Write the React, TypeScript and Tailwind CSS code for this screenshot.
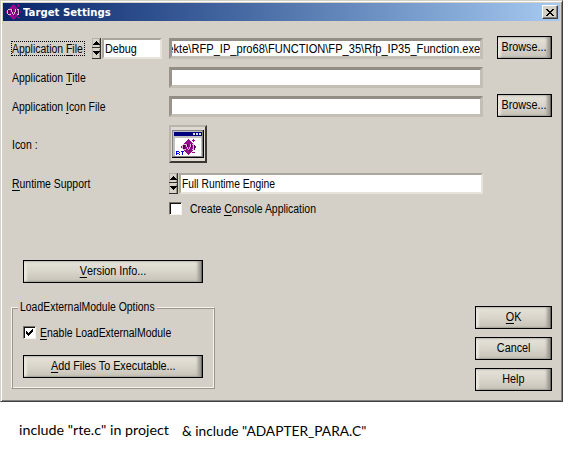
import type { ReactNode } from "react";

function Label({ children, scale = "scale-x-[0.87]", origin = "origin-left" }: { children: ReactNode; scale?: string; origin?: string }) {
  return <span className={`inline-block whitespace-pre ${origin} ${scale}`}>{children}</span>;
}

function Key({ children }: { children: ReactNode }) {
  return <span className="inline-block h-[13px] border-b border-black leading-[13px]">{children}</span>;
}

function Button({ children, className }: { children: ReactNode; className: string }) {
  return (
    <button
      className={`flex h-[23px] shrink-0 items-center justify-center border border-black bg-linear-to-b from-[#e6e3da] via-[#d9d5cb] to-[#c6c2b8] shadow-[inset_-1px_0_1px_#66645d,inset_-4px_0_3px_#a09d94,inset_3px_0_2px_#e9e6dc,inset_0_-1px_1px_#aaa69c] ${className}`}
    >
      <Label origin="origin-center" scale="scale-x-[0.9]">{children}</Label>
    </button>
  );
}

function Field({ children }: { children?: ReactNode }) {
  return (
    <div className="mt-[2px] flex h-[21px] w-[314px] shrink-0 items-center overflow-hidden border-[3px] border-t-[#928e85] border-r-[#c3bfb5] border-b-[#c3bfb5] border-l-[#98948b] bg-white">
      {children}
    </div>
  );
}

function Ring({ children, className }: { children: ReactNode; className: string }) {
  return (
    <div className="flex shrink-0 items-start">
      <svg className="mt-[2px] h-[21px] w-[9px]" viewBox="0 0 9 21" shapeRendering="crispEdges">
        <path d="M0 0h9v21H0z" fill="#d8d4ca" />
        <path d="M0 0h9v1H1v19H0z" fill="#b5b1a7" />
        <path d="M8 0h1v21H0v-1h8zM0 9h9v1H0z" fill="#33312d" />
        <path d="M7 1h1v8H7zM7 11h1v9H7z" fill="#9c988e" />
        <path d="M4 3h1v1h1v1h1v1h1v1H1V6h1V5h1V4h1zM1 13h7v1H7v1H6v1H5v1H4v-1H3v-1H2v-1H1z" fill="#000" />
      </svg>
      <div className={`mt-[2px] ml-px flex h-[21px] items-center border-[2px] border-t-[#aaa69c] border-r-[#e7e3d9] border-b-[#e7e3d9] border-l-[#aaa69c] bg-white pt-px pl-px ${className}`}>
        {children}
      </div>
    </div>
  );
}

function Check({ checked = false }: { checked?: boolean }) {
  return (
    <span className="block h-[13px] w-[13px] shrink-0 border border-t-[#77736b] border-r-[#f4f1ea] border-b-[#f4f1ea] border-l-[#77736b] bg-white shadow-[inset_1px_1px_0_#111]">
      {checked && (
        <svg className="h-[11px] w-[11px]" viewBox="0 0 11 11" shapeRendering="crispEdges">
          <path d="M2 4h1v1h1v1h1V5h1V4h1V3h1V2h1v3H8v1H7v1H6v1H5v1H4V8H3V7H2z" fill="#000" />
        </svg>
      )}
    </span>
  );
}

function CviMark() {
  return (
    <g>
      <path d="M8 0l8 8-8 8-8-8z" fill="#96088f" />
      <path d="M3 6h2v4H3zM7 5h1v3H7zM9 11h1v1H9zM11 5h1v4h-1zM14 6h1v5h-1z" fill="#4a0447" />
      <path d="M3 5h3v1H3zM2 6h1v4H2zM3 10h3v1H3zM6 5h1v3H6zM7 8h1v2H7zM8 10h1v1H8zM9 8h1v2H9zM10 5h1v3h-1zM12 5h2v1h-2zM13 6h1v4h-1zM12 10h2v1h-2z" fill="#dcb8d6" />
      <path d="M12 1h3v1h-3zM13 0h1v3h-1zM12 13h3v1h-3z" fill="#96088f" />
    </g>
  );
}

function TargetIcon() {
  return (
    <div className="mt-[2px] h-[38px] w-[38px] border-2 border-t-[#b9b5ab] border-r-[#3c3934] border-b-[#3c3934] border-l-[#b9b5ab] bg-[#dedad0] p-px">
      <svg className="h-[32px] w-[32px]" viewBox="0 0 32 32" shapeRendering="crispEdges">
        <path d="M0 2h32v28H0z" fill="#000" />
        <path d="M0 2h31v27H0z" fill="#808080" />
        <path d="M1 3h29v25H1z" fill="#c0c0c0" />
        <path d="M2 4h28v4H2z" fill="#000080" />
        <path d="M21 5h2v2h-2zM24 5h2v2h-2zM27 5h2v2h-2z" fill="#e0e0e0" />
        <path d="M3 10h26v18H3z" fill="#fff" />
        <g transform="translate(8 11)"><CviMark /></g>
        <path d="M4 23h3v1H5v3H4zM7 24h1v1H7zM5 25h2v1H5zM7 26h1v1H7zM9 23h3v1h-1v3h-1v-3H9z" fill="#0000ee" />
      </svg>
    </div>
  );
}

function Row({ label, height, children }: { label: ReactNode; height: string; children: ReactNode }) {
  return (
    <div className={`flex items-start ${height}`}>
      <div className="w-[157px] shrink-0">{label}</div>
      {children}
    </div>
  );
}

export default function App() {
  return (
    <main className="h-[458px] w-[570px] overflow-hidden bg-white font-['Liberation_Sans',Arial,sans-serif] text-[12px] leading-[15px] text-black">
      <section className="h-[402px] w-[563px] border border-t-[#d4d0c8] border-r-[#404040] border-b-[#404040] border-l-[#d4d0c8] bg-[#d4d0c8] shadow-[inset_1px_1px_0_#fff,inset_-1px_-1px_0_#808080]">
        <header className="mx-[2px] mt-[2px] flex h-[18px] items-center bg-linear-to-r from-[#0a246a] to-[#a6caf0] px-[2px]">
          <svg className="h-[16px] w-[16px]" viewBox="0 0 16 16" shapeRendering="crispEdges"><CviMark /></svg>
          <h1 className="ml-[2px] font-['DejaVu_Sans',Verdana,sans-serif] text-[11px] font-bold text-white">
            <Label scale="scale-x-[0.92]">Target Settings</Label>
          </h1>
          <button className="ml-auto flex h-[14px] w-[16px] items-center justify-center border border-t-white border-r-[#404040] border-b-[#404040] border-l-white bg-[#d4d0c8] shadow-[inset_-1px_-1px_0_#808080]">
            <svg className="h-[7px] w-[8px]" viewBox="0 0 8 7" shapeRendering="crispEdges">
              <path d="M0 0h2v1h1v1h2V1h1V0h2v1H7v1H6v1H5v1h1v1h1v1h1v1H6V6H5V5H3v1H2v1H0V6h1V5h1V4h1V3H2V2H1V1H0z" fill="#000" />
            </svg>
          </button>
        </header>

        <div className="pt-[15px] pl-[11px]">
          <Row
            height="h-[29px]"
            label={
              <div className="flex items-start">
                <div className="mt-[5px] mr-[7px] -ml-px flex h-[15px] w-[74px] items-center border border-dotted border-black pt-[2px]">
                  <Label>Application <Key>F</Key>ile</Label>
                </div>
                <Ring className="w-[60px]"><Label scale="scale-x-[0.9]">Debug</Label></Ring>
              </div>
            }
          >
            <Field>
              <div className="flex w-full justify-end pt-px">
                <Label origin="origin-right" scale="scale-x-[0.925]">ekte\RFP_IP_pro68\FUNCTION\FP_35\Rfp_IP35_Function.exe</Label>
              </div>
            </Field>
            <Button className="ml-[14px] w-[55px]">Browse...</Button>
          </Row>
          <Row height="h-[29px]" label={<div className="pt-[6px]"><Label>Application <Key>T</Key>itle</Label></div>}>
            <Field />
          </Row>
          <Row height="h-[29px]" label={<div className="pt-[6px]"><Label>Application <Key>I</Key>con File</Label></div>}>
            <Field />
            <Button className="ml-[14px] w-[55px]">Browse...</Button>
          </Row>
          <Row height="h-[48px]" label={<div className="pt-[15px]"><Label>Icon :</Label></div>}>
            <TargetIcon />
          </Row>
          <Row height="h-[31px]" label={<div className="pt-[6px]"><Label><Key>R</Key>untime Support</Label></div>}>
            <Ring className="w-[304px]"><Label scale="scale-x-[0.86]">Full Runtime Engine</Label></Ring>
          </Row>
          <Row height="h-[58px]" label={null}>
            <Check />
            <div className="ml-[8px]"><Label>Create <Key>C</Key>onsole Application</Label></div>
          </Row>
        </div>

        <div className="flex items-start">
          <div className="w-[226px] shrink-0 pl-[10px]">
            <Button className="ml-[12px] w-[180px]"><Key>V</Key>ersion Info...</Button>
            <fieldset className="mt-[17px] h-[89px] w-[204px] border border-t-[#f5f3ee] border-r-[#9a9588] border-b-[#9a9588] border-l-[#f5f3ee] px-[11px] shadow-[inset_1px_1px_0_#9a9588,inset_-1px_-1px_0_#f5f3ee]">
              <legend className="-ml-[5px] w-[139px] bg-[#d4d0c8] px-[2px]"><Label>LoadExternalModule Options</Label></legend>
              <div className="mt-[11px] flex h-[18px]">
                <Check checked />
                <div className="ml-[4px]"><Label><Key>E</Key>nable LoadExternalModule</Label></div>
              </div>
              <Button className="mt-[11px] w-[180px]"><Key>A</Key>dd Files To Executable...</Button>
            </fieldset>
          </div>
          <div className="mt-[46px] ml-[248px] flex flex-col gap-[8px]">
            <Button className="w-[77px]"><Key>O</Key>K</Button>
            <Button className="w-[77px]">Cancel</Button>
            <Button className="w-[77px]">Help</Button>
          </div>
        </div>
      </section>

      <p className="flex pt-[19px] pl-[19px] font-[Lato,sans-serif] text-[14px] leading-[18px]">
        <span className="w-[163px]"><Label scale="scale-x-[1.02]">include "rte.c" in project</Label></span>
        <span className="pt-px"><Label scale="scale-x-[0.98]">&amp; include "ADAPTER_PARA.C"</Label></span>
      </p>
    </main>
  );
}
